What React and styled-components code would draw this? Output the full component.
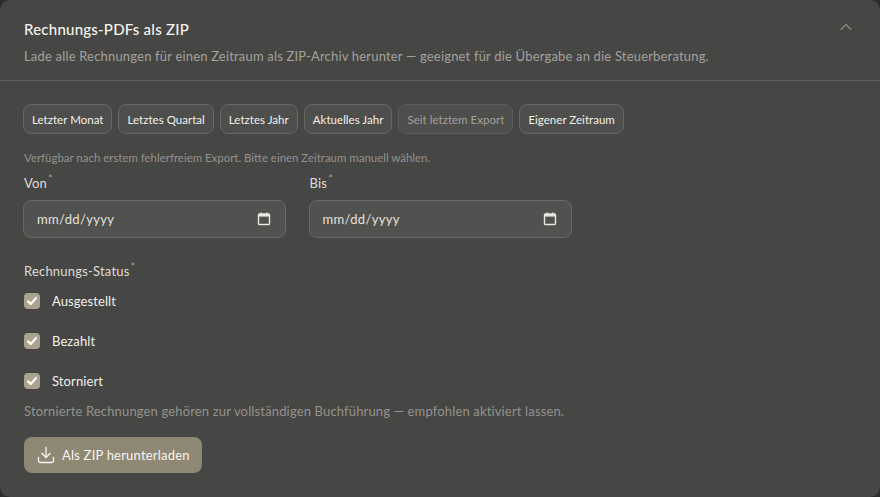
import React from "react";
import styled, { createGlobalStyle } from "styled-components";
import { ChevronUp, Download } from "lucide-react";

const Global = createGlobalStyle`
  html, body {
    margin: 0;
    padding: 0;
    background: #2c2c2a;
  }
  * {
    box-sizing: border-box;
  }
`;

const Card = styled.div`
  width: 880px;
  height: 497px;
  overflow: hidden;
  background: #464644;
  border-radius: 10px;
  font-family: "Lato", "Liberation Sans", sans-serif;
  color: #f2f0ea;
`;

const Header = styled.div`
  height: 81px;
  padding: 20px 24px 0;
  display: flex;
  justify-content: space-between;
  border-bottom: 1px solid #5c5c5a;
`;

const Title = styled.h2`
  margin: 0;
  font-size: 15px;
  line-height: 18px;
  font-weight: 500;
  letter-spacing: 0.23px;
  color: #f6f4ef;
`;

const Subtitle = styled.p`
  margin: 9px 0 0;
  font-size: 13px;
  line-height: 18px;
  letter-spacing: 0.18px;
  color: #a3a29d;
`;

const Toggle = styled.span`
  color: #8f8e89;
  margin: -3px 0 0 0;
`;

const Body = styled.div`
  padding: 23px 24px 0;
`;

const Presets = styled.div`
  display: flex;
  gap: 6px;
  margin-left: -1px;
`;

const Preset = styled.button`
  height: 30px;
  padding: 0 8px;
  border-radius: 8px;
  border: 1px solid ${(p) => (p.disabled ? "#5c5c5a" : "#686866")};
  background: #4e4e4c;
  font-family: inherit;
  font-size: 11.5px;
  letter-spacing: 0.03px;
  color: ${(p) => (p.disabled ? "#a3a29d" : "#f2f0ea")};
`;

const Hint = styled.p`
  margin: ${(p) => p.$top}px 0 0;
  font-size: 13px;
  line-height: 16px;
  letter-spacing: 0.15px;
  color: #94938e;
`;

const SmallHint = styled(Hint)`
  font-size: 11.45px;
  letter-spacing: 0;
`;

const Dates = styled.div`
  display: flex;
  gap: 22.5px;
  margin-top: 8px;
  margin-left: -1px;
`;

const Field = styled.div`
  width: 263px;
`;

const Label = styled.div`
  font-size: 13px;
  line-height: 18px;
  margin-left: 1px;
  letter-spacing: 0.2px;
  color: #dedcd6;
`;

const Star = styled.sup`
  font-size: 11px;
  line-height: 0;
  margin-left: 1px;
  color: #a39c9c;
`;

const DateBox = styled.div`
  height: 38px;
  margin-top: 8px;
  padding: 0 14px 0 13px;
  display: flex;
  align-items: center;
  justify-content: space-between;
  border: 1px solid #686866;
  border-radius: 8px;
  background: #51514f;
  font-size: 13px;
  letter-spacing: 0.35px;
  color: #e4e2dc;
`;

const StatusLabel = styled(Label)`
  margin: 24px 0 0;
`;

const CheckRow = styled.label`
  height: 40px;
  display: flex;
  align-items: center;
  gap: 12px;
  font-size: 13px;
  letter-spacing: 0.1px;
  color: #f2f0ea;
`;

const CheckBox = styled.span`
  width: 16px;
  height: 16px;
  display: flex;
  align-items: center;
  justify-content: center;
  border-radius: 4px;
  background: #aaa38e;
`;

const Rows = styled.div`
  margin-top: 1px;
`;

const ZipButton = styled.button`
  height: 36px;
  margin-top: 18px;
  padding: 0 12px;
  display: flex;
  align-items: center;
  gap: 6px;
  border: 0;
  border-radius: 8px;
  background: #8f8874;
  font-family: inherit;
  font-size: 13px;
  letter-spacing: 0.2px;
  color: #f6f4ef;
`;

const Calendar = () => (
  <svg width="14" height="14" viewBox="0 0 14 14" fill="none">
    <rect x="1.5" y="2" width="11" height="10.5" rx="1" stroke="#e8e6e0" strokeWidth="1.4" />
    <rect x="1.5" y="2" width="11" height="2.6" fill="#e8e6e0" />
    <path d="M4 0.5v2M10 0.5v2" stroke="#e8e6e0" strokeWidth="1.4" />
  </svg>
);

const Check = () => (
  <svg width="12" height="12" viewBox="0 0 12 12" fill="none">
    <path d="M2 6.4 4.8 9l5.2-6" stroke="#fff" strokeWidth="2.2" strokeLinecap="round" strokeLinejoin="round" />
  </svg>
);

const presets = [
  { label: "Letzter Monat" },
  { label: "Letztes Quartal" },
  { label: "Letztes Jahr" },
  { label: "Aktuelles Jahr" },
  { label: "Seit letztem Export", disabled: true },
  { label: "Eigener Zeitraum" },
];

export default function App() {
  return (
    <>
      <Global />
      <Card>
        <Header>
          <div>
            <Title>Rechnungs-PDFs als ZIP</Title>
            <Subtitle>
              Lade alle Rechnungen für einen Zeitraum als ZIP-Archiv herunter — geeignet für die Übergabe an die
              Steuerberatung.
            </Subtitle>
          </div>
          <Toggle>
            <ChevronUp size={20} strokeWidth={1.4} />
          </Toggle>
        </Header>
        <Body>
          <Presets>
            {presets.map((item) => (
              <Preset key={item.label} disabled={item.disabled}>
                {item.label}
              </Preset>
            ))}
          </Presets>
          <SmallHint $top={16}>
            Verfügbar nach erstem fehlerfreiem Export. Bitte einen Zeitraum manuell wählen.
          </SmallHint>
          <Dates>
            {["Von", "Bis"].map((name) => (
              <Field key={name}>
                <Label>
                  {name}
                  <Star>*</Star>
                </Label>
                <DateBox>
                  mm/dd/yyyy
                  <Calendar />
                </DateBox>
              </Field>
            ))}
          </Dates>
          <StatusLabel>
            Rechnungs-Status<Star>*</Star>
          </StatusLabel>
          <Rows>
            {["Ausgestellt", "Bezahlt", "Storniert"].map((name) => (
              <CheckRow key={name}>
                <CheckBox>
                  <Check />
                </CheckBox>
                {name}
              </CheckRow>
            ))}
          </Rows>
          <Hint $top={2}>
            Stornierte Rechnungen gehören zur vollständigen Buchführung — empfohlen aktiviert lassen.
          </Hint>
          <ZipButton>
            <Download size={20} strokeWidth={1.6} />
            Als ZIP herunterladen
          </ZipButton>
        </Body>
      </Card>
    </>
  );
}
